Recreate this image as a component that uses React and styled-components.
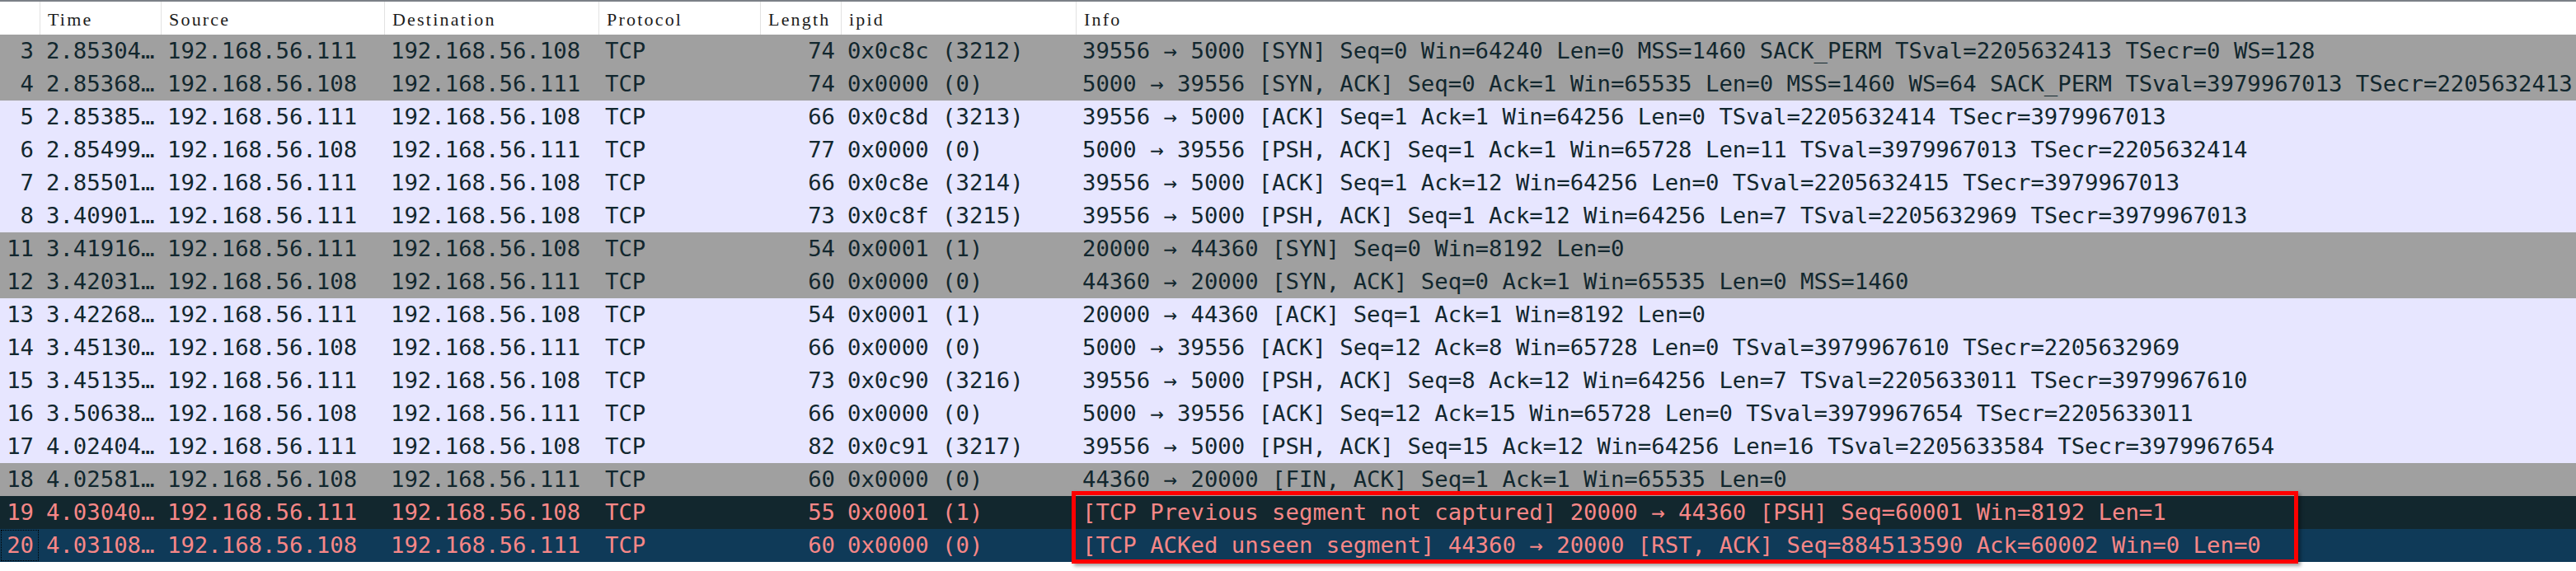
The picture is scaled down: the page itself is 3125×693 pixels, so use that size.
import styled, { createGlobalStyle } from 'styled-components';

const GlobalStyle = createGlobalStyle`
  html, body {
    margin: 0;
    padding: 0;
    background: #ffffff;
  }
`;

const COLUMNS = [
  { key: 'no', title: '', width: 48, align: 'right' },
  { key: 'time', title: 'Time', width: 147 },
  { key: 'src', title: 'Source', width: 271 },
  { key: 'dst', title: 'Destination', width: 260 },
  { key: 'proto', title: 'Protocol', width: 196 },
  { key: 'len', title: 'Length', width: 98, align: 'right' },
  { key: 'ipid', title: 'ipid', width: 285 },
  { key: 'info', title: 'Info', width: 0 },
];

const A = '192.168.56.111';
const B = '192.168.56.108';

const ROWS = [
  ['3', '2.85304…', A, B, 'TCP', '74', '0x0c8c (3212)', '39556 → 5000 [SYN] Seq=0 Win=64240 Len=0 MSS=1460 SACK_PERM TSval=2205632413 TSecr=0 WS=128', 'syn'],
  ['4', '2.85368…', B, A, 'TCP', '74', '0x0000 (0)', '5000 → 39556 [SYN, ACK] Seq=0 Ack=1 Win=65535 Len=0 MSS=1460 WS=64 SACK_PERM TSval=3979967013 TSecr=2205632413', 'syn'],
  ['5', '2.85385…', A, B, 'TCP', '66', '0x0c8d (3213)', '39556 → 5000 [ACK] Seq=1 Ack=1 Win=64256 Len=0 TSval=2205632414 TSecr=3979967013', 'tcp'],
  ['6', '2.85499…', B, A, 'TCP', '77', '0x0000 (0)', '5000 → 39556 [PSH, ACK] Seq=1 Ack=1 Win=65728 Len=11 TSval=3979967013 TSecr=2205632414', 'tcp'],
  ['7', '2.85501…', A, B, 'TCP', '66', '0x0c8e (3214)', '39556 → 5000 [ACK] Seq=1 Ack=12 Win=64256 Len=0 TSval=2205632415 TSecr=3979967013', 'tcp'],
  ['8', '3.40901…', A, B, 'TCP', '73', '0x0c8f (3215)', '39556 → 5000 [PSH, ACK] Seq=1 Ack=12 Win=64256 Len=7 TSval=2205632969 TSecr=3979967013', 'tcp'],
  ['11', '3.41916…', A, B, 'TCP', '54', '0x0001 (1)', '20000 → 44360 [SYN] Seq=0 Win=8192 Len=0', 'syn'],
  ['12', '3.42031…', B, A, 'TCP', '60', '0x0000 (0)', '44360 → 20000 [SYN, ACK] Seq=0 Ack=1 Win=65535 Len=0 MSS=1460', 'syn'],
  ['13', '3.42268…', A, B, 'TCP', '54', '0x0001 (1)', '20000 → 44360 [ACK] Seq=1 Ack=1 Win=8192 Len=0', 'tcp'],
  ['14', '3.45130…', B, A, 'TCP', '66', '0x0000 (0)', '5000 → 39556 [ACK] Seq=12 Ack=8 Win=65728 Len=0 TSval=3979967610 TSecr=2205632969', 'tcp'],
  ['15', '3.45135…', A, B, 'TCP', '73', '0x0c90 (3216)', '39556 → 5000 [PSH, ACK] Seq=8 Ack=12 Win=64256 Len=7 TSval=2205633011 TSecr=3979967610', 'tcp'],
  ['16', '3.50638…', B, A, 'TCP', '66', '0x0000 (0)', '5000 → 39556 [ACK] Seq=12 Ack=15 Win=65728 Len=0 TSval=3979967654 TSecr=2205633011', 'tcp'],
  ['17', '4.02404…', A, B, 'TCP', '82', '0x0c91 (3217)', '39556 → 5000 [PSH, ACK] Seq=15 Ack=12 Win=64256 Len=16 TSval=2205633584 TSecr=3979967654', 'tcp'],
  ['18', '4.02581…', B, A, 'TCP', '60', '0x0000 (0)', '44360 → 20000 [FIN, ACK] Seq=1 Ack=1 Win=65535 Len=0', 'syn'],
  ['19', '4.03040…', A, B, 'TCP', '55', '0x0001 (1)', '[TCP Previous segment not captured] 20000 → 44360 [PSH] Seq=60001 Win=8192 Len=1', 'bad'],
  ['20', '4.03108…', B, A, 'TCP', '60', '0x0000 (0)', '[TCP ACKed unseen segment] 44360 → 20000 [RST, ACK] Seq=884513590 Ack=60002 Win=0 Len=0', 'selected'],
];

const ROW_COLORS = {
  syn: { bg: '#a0a0a0', fg: '#12272e' },
  tcp: { bg: '#e7e6ff', fg: '#12272e' },
  bad: { bg: '#12272e', fg: '#f78787' },
  selected: { bg: '#0f3a58', fg: '#f78787' },
};

const Page = styled.div`
  position: relative;
  width: 3125px;
  height: 693px;
  overflow: hidden;
  background: #ffffff;
`;

const HeaderBar = styled.div`
  display: flex;
  height: 40px;
  border-top: 2px solid #7b8087;
  background: #ffffff;
`;

const HeaderCell = styled.div`
  flex: ${(p) => (p.$width ? `0 0 ${p.$width}px` : '1 1 auto')};
  box-sizing: border-box;
  padding: 4px 8px 0 9px;
  border-left: ${(p) => (p.$first ? 'none' : '1px solid #e2e2e2')};
  font-family: 'Liberation Serif', 'Times New Roman', serif;
  font-size: 22px;
  letter-spacing: 2.2px;
  line-height: 36px;
  color: #1b1b1b;
  white-space: nowrap;
  overflow: hidden;
`;

const Row = styled.div`
  display: flex;
  height: 40px;
  background: ${(p) => ROW_COLORS[p.$kind].bg};
  color: ${(p) => ROW_COLORS[p.$kind].fg};
`;

const Cell = styled.div`
  flex: ${(p) => (p.$width ? `0 0 ${p.$width}px` : '1 1 auto')};
  box-sizing: border-box;
  padding: 0 7px 0 8px;
  text-align: ${(p) => p.$align || 'left'};
  font-family: 'DejaVu Sans Mono', 'Liberation Mono', monospace;
  font-size: 27.3px;
  line-height: 39px;
  white-space: pre;
  overflow: hidden;
  outline: ${(p) => (p.$focus ? '1px dotted #000000' : 'none')};
  outline-offset: -2px;
`;

const Highlight = styled.div`
  position: absolute;
  left: 1300px;
  top: 596px;
  width: 1488px;
  height: 88px;
  box-sizing: border-box;
  border: 5px solid #ff0000;
  box-shadow: 3px 3px 4px rgba(0, 0, 0, 0.35);
  pointer-events: none;
`;

const App = () => {
  return (
    <Page>
      <GlobalStyle />
      <HeaderBar>
        {COLUMNS.map((col, i) => (
          <HeaderCell key={col.key} $width={col.width} $first={i === 0}>
            {col.title}
          </HeaderCell>
        ))}
      </HeaderBar>
      {ROWS.map((row) => (
        <Row key={row[0]} $kind={row[8]}>
          {COLUMNS.map((col, i) => (
            <Cell
              key={col.key}
              $width={col.width}
              $align={col.align}
              $focus={row[8] === 'selected' && i === 0}
            >
              {row[i]}
            </Cell>
          ))}
        </Row>
      ))}
      <Highlight />
    </Page>
  );
};

export default App;
